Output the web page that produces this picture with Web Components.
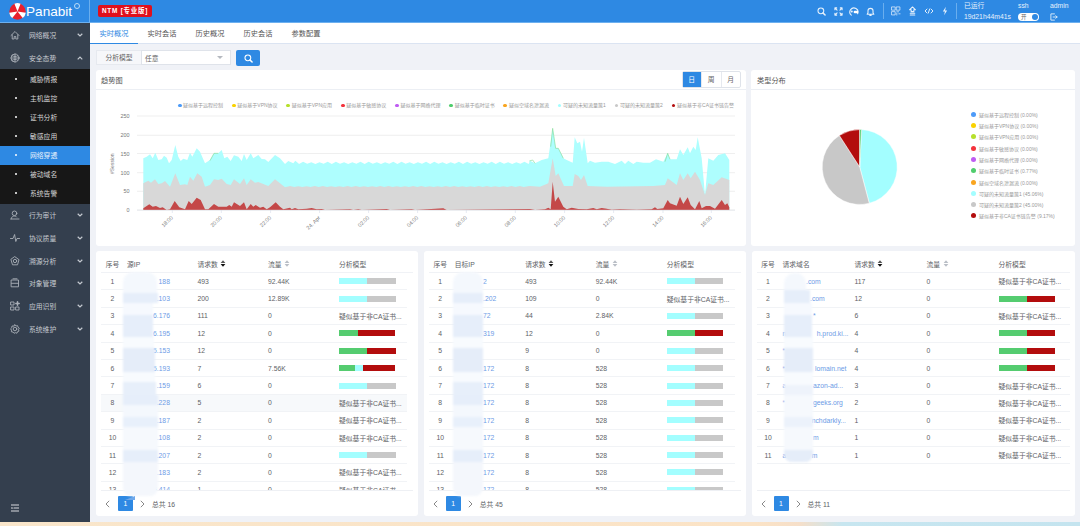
<!DOCTYPE html>
<html lang="zh"><head><meta charset="utf-8"><title>Panabit</title>
<style>
html,body{margin:0;padding:0;height:526px;overflow:hidden;background:#f0f2f7;font-family:"Liberation Sans","Noto Sans CJK SC",sans-serif;font-size:7px;color:#606266}
</style></head><body>
<app-shell></app-shell>
<script>
const FONT='"Liberation Sans","Noto Sans CJK SC",sans-serif';
function def(name,render){customElements.define(name,class extends HTMLElement{connectedCallback(){if(this.shadowRoot)return;const s=this.attachShadow({mode:'open'});s.innerHTML=render(this)}})}
const ic=(w,h,vb,body,extra='')=>`<svg width="${w}" height="${h}" viewBox="${vb}" fill="none" stroke="currentColor" stroke-width="1.2" stroke-linecap="round" stroke-linejoin="round" ${extra}>${body}</svg>`;

def('app-shell',()=>`<style>
:host{display:flex;flex-direction:column;height:526px;width:1080px;overflow:hidden}
.mid{flex:1;display:flex;min-height:0}
.strip{height:4px;background:linear-gradient(90deg,#f9e6cb 0,#fbe3c6 70%,#f6dfc9 74%,#c7e6f0 78%,#c4e4ef 100%)}
.main{flex:1;display:flex;flex-direction:column;min-width:0;padding-bottom:6px}
.content{flex:1;display:flex;flex-direction:column;gap:5px;padding:6px 5.5px 0 6px;min-height:0}
.r1{display:flex;gap:5px;height:176px}
.r2{display:flex;gap:5.5px;height:265px}
</style>
<app-header></app-header>
<div class="mid"><side-nav></side-nav>
<div class="main"><tab-bar></tab-bar>
<div class="content"><filter-bar></filter-bar>
<div class="r1"><trend-card></trend-card><pie-card></pie-card></div>
<div class="r2"><data-table kind="src"></data-table><data-table kind="dst"></data-table><data-table kind="dom"></data-table></div>
</div></div></div><div class="strip"></div>`);

def('app-header',()=>`<style>
:host{display:flex;align-items:center;height:23px;background:#2e89e3;border-bottom:1px solid #6db0ef;box-sizing:border-box;color:#e6f1fc;font-family:${FONT}}
.logo{width:90px;height:22px;display:flex;align-items:center;padding-left:9px;box-sizing:border-box;position:relative;border-right:1px solid #6aaeee}
.logo b{font:400 13.6px "Liberation Sans",sans-serif;color:#fff}
.logo i{position:absolute;left:73.5px;top:3px;width:4px;height:4px;border:.7px solid #bcdcf8;border-radius:50%}
.badge{margin-left:8px;background:#e0101c;color:#fff;border-radius:2px;font:700 6.4px ${FONT};letter-spacing:.8px;width:54px;height:12px;line-height:12px;text-align:center;white-space:nowrap}
.sp{flex:1}
.ico{display:flex;align-items:center;justify-content:center;width:16.3px;height:12px}
.sep{width:1px;height:16px;background:#6aaeee;margin:0 4px}
.grp{display:flex;align-items:center}
.stat{display:flex;flex-direction:column;gap:3px;font-size:6.8px;line-height:8px;white-space:nowrap}
.tg{width:21px;height:8px;border-radius:4px;background:#fff;color:#666;font-size:5.5px;line-height:8px;padding-left:3px;box-sizing:border-box;position:relative;display:block}
.tg::after{content:"";position:absolute;right:1px;top:1px;width:6px;height:6px;border-radius:50%;background:#2e89e3}
</style>
<div class="logo">
<svg width="17" height="17" viewBox="-10 -10 20 20"><circle r="9.6" fill="#e8202c"/><g fill="#fff"><path d="M0 0L-3.6-9.2A10 10 0 0 1 3.6-9.2Z"/><path d="M0 0L-3.6-9.2A10 10 0 0 1 3.6-9.2Z" transform="rotate(120)"/><path d="M0 0L-3.6-9.2A10 10 0 0 1 3.6-9.2Z" transform="rotate(240)"/></g></svg>
<b>Panabit</b><i></i></div>
<div class="badge">NTM [专业版]</div><div class="sp"></div>
<div class="grp">
<span class="ico">${ic(9,9,'0 0 10 10','<circle cx="4.3" cy="4.3" r="3.2"/><path d="M6.8 6.8L9 9" stroke-width="1.6"/>')}</span>
<span class="ico">${ic(9,9,'0 0 10 10','<path d="M1 1L3.4 3.4M9 1L6.6 3.4M1 9L3.4 6.6M9 9L6.6 6.6M1 3V1H3M7 1H9V3M1 7V9H3M9 7V9H7"/>')}</span>
<span class="ico">${ic(10,9,'0 0 11 10','<path d="M2.5 9A4.5 4.5 0 1 1 9.5 7.5"/><path d="M10 4.2H6.5A1.4 1.4 0 0 0 6.5 7H10Z" fill="#fff" stroke="none"/><circle cx="3" cy="5" r=".6"/>')}</span>
<span class="ico">${ic(9,9,'0 0 10 10','<path d="M1.3 8H8.7L7.8 6.5V4.3A2.8 2.8 0 0 0 2.2 4.3V6.5ZM4.2 9.3H5.8"/>')}</span>
<span class="sep"></span>
<span class="ico">${ic(10,10,'0 0 11 11','<rect x="1" y="1" width="3.6" height="3.6" stroke-width=".8"/><rect x="6.2" y="1" width="3.6" height="3.6" stroke-width=".8"/><rect x="1" y="6.2" width="3.6" height="3.6" stroke-width=".8"/><path d="M6.4 6.4H8.4M6.4 8V10M8.6 8.6H10" stroke-width=".8"/>')}</span>
<span class="ico">${ic(9,10,'0 0 10 11','<path d="M5 1L8.3 4.2H6.5V6.2H3.5V4.2H1.7ZM2.5 8H7.5M2.5 10H7.5"/>')}</span>
<span class="ico">${ic(10,8,'0 0 12 10','<path d="M3.5 2.5L1 5L3.5 7.5M8.5 2.5L11 5L8.5 7.5M6.8 2.5L5.2 7.5"/>')}</span>
<span class="ico">${ic(6,10,'0 0 7 11','<path d="M4.5 .5L1 6H3.4L2.5 10.5L6 4.8H3.6Z" fill="currentColor" stroke="none"/>')}</span>
<span class="sep" style="margin:0 7px 0 3px"></span>
<div class="stat" style="width:54px"><span>已运行</span><span>19d21h44m41s</span></div>
<div class="stat" style="width:32px"><span>ssh</span><span class="tg">开</span></div>
<div class="stat" style="width:30px"><span>admin</span>${ic(8,8,'0 0 9 9','<path d="M5 1H1V8H5M3.5 4.5H8M6.5 3L8 4.5L6.5 6" stroke-width="1"/>')}</div>
</div>`);

const navIcons={
home:'<path d="M1 5.5L5 1.5L9 5.5M2.2 4.8V9H4.2V6.5H5.8V9H7.8V4.8"/>',
globe:'<circle cx="5" cy="5" r="4"/><path d="M1 5H9M5 1V9M2.2 2.8C4 3.8 6 3.8 7.8 2.8M2.2 7.2C4 6.2 6 6.2 7.8 7.2"/>',
user:'<circle cx="4.5" cy="3.3" r="2.3"/><path d="M1 9C1.5 6.8 3 6 4.5 6S6 6.5 6.5 7M1 9H9"/>',
pulse:'<path d="M.5 5.5H3L4.6 1.5L5.8 8.5L7 5.5H9.5"/>',
hex:'<path d="M5 .8L9 3.7L7.5 8.8H2.5L1 3.7Z"/><circle cx="5" cy="5" r="1.7"/>',
box:'<rect x="1.5" y="2" width="7" height="6.8"/><path d="M1.5 5.3H8.5M3 .8H7"/>',
apps:'<rect x="1" y="1" width="3" height="3"/><rect x="1" y="6" width="3" height="3"/><rect x="6" y="6" width="3" height="3"/><path d="M7.5 .8V4.2M5.8 2.5H9.2" stroke-width="1.5"/>',
gear:'<circle cx="5" cy="5" r="1.8"/><path d="M5 .8L6 2L7.6 1.7L8 3.3L9.3 4.2L8.5 5.6L9 7.1L7.5 7.7L7 9.2L5.4 8.7L4 9.3L3 8L1.4 7.8L1.5 6.1L.6 4.8L1.8 3.7L2 2L3.7 2.1Z" stroke-width=".9"/>'};
const chev=(up)=>`<svg width="6" height="4" viewBox="0 0 6 4" fill="none" stroke="#c4c9d0" stroke-width="1.2"><path d="${up?'M.7 3.3L3 1L5.3 3.3':'M.7 .8L3 3L5.3 .8'}"/></svg>`;
def('side-nav',()=>{
const item=(ic_,t,up)=>`<div class="it"><span class="i">${ic(10,10,'0 0 10 10',navIcons[ic_])}</span><span class="t">${t}</span>${chev(up)}</div>`;
const sub=(t,a)=>`<div class="sb${a?' on':''}"><em></em><span>${t}</span></div>`;
return `<style>
:host{display:flex;flex-direction:column;width:90px;flex:none;background:#343f4e;color:#c6cad0;font:6.8px ${FONT}}
.it{height:22.7px;display:flex;align-items:center;padding:0 7.5px 0 10px;box-sizing:border-box}
.i{width:10px;height:10px;display:block;color:#aab0b8;margin-right:9px}.i svg{display:block}
.i svg{stroke-width:.9}
.t{flex:1;white-space:nowrap}
.top{background:#36414f;padding-top:1px}
.subs{background:#171717;padding:.5px 0 1px}
.sb{height:19px;display:flex;align-items:center;padding-left:14.5px;color:#d5d5d5;white-space:nowrap}
.sb em{width:2px;height:2px;border-radius:50%;background:#fff;margin-right:13.5px}
.sb.on{background:#2e89e3;color:#e8f2fc}
.g{flex:1}.foot{height:18px;display:flex;padding:0 0 0 11px;color:#d8dadd}
</style><div class="top">${item('home','网络概况')}${item('globe','安全态势',1)}</div>
<div class="subs">${sub('威胁情报')}${sub('主机监控')}${sub('证书分析')}${sub('敏感应用')}${sub('网络穿透',1)}${sub('被动域名')}${sub('系统告警')}</div>
${item('user','行为审计')}${item('pulse','协议质量')}${item('hex','溯源分析')}${item('box','对象管理')}${item('apps','应用识别')}${item('gear','系统维护')}
<div class="g"></div><div class="foot">${ic(8,8,'0 0 8 8','<path d="M0 1H8M3 4H8M0 7H8M0 4H1.5"/>')}</div>`});

def('tab-bar',()=>`<style>
:host{display:flex;height:21px;background:#fff;border-bottom:1px solid #dbe4f2;box-sizing:border-box;font:7.2px ${FONT};color:#555}
span{width:48px;text-align:center;line-height:21px;white-space:nowrap;box-sizing:border-box;height:21px}
.on{color:#2e89e3;border-bottom:1px solid #2e89e3}
</style><span class="on">实时概况</span><span>实时会话</span><span>历史概况</span><span>历史会话</span><span>参数配置</span>`);

def('filter-bar',()=>`<style>
:host{display:flex;height:15px;font:6.8px ${FONT};color:#666;align-items:stretch}
.l{width:45px;background:#f6f7fa;border:1px solid #e6e9ef;border-right:0;box-sizing:border-box;text-align:center;line-height:14px}
.s{width:90px;background:#fff;border:1px solid #dfe3ea;box-sizing:border-box;display:flex;align-items:center;justify-content:space-between;padding:0 7px 0 3px}
.s i{width:0;height:0;border:3px solid transparent;border-top:3.4px solid #b5b9c0;margin-top:3px}
.b{width:24px;margin-left:5px;background:#2e89e3;border-radius:2px;color:#fff;display:flex;align-items:center;justify-content:center;height:16px}
</style><span class="l">分析模型</span><span class="s">任意<i></i></span><span class="b">${ic(9,9,'0 0 10 10','<circle cx="4.3" cy="4.3" r="3.2"/><path d="M6.8 6.8L9 9" stroke-width="1.6"/>')}</span>`);

const LEG=[['疑似基于远程控制','#4d9bf8'],['疑似基于VPN协议','#fad200'],['疑似基于VPN应用','#b6e02c'],['疑似基于敏感协议','#f4333c'],['疑似基于网络代理','#bf5cf2'],['疑似基于临时证书','#50cd6d'],['疑似空域名泄漏流','#f9a51f'],['可疑的未知流量簇1','#a3feff'],['可疑的未知流量簇2','#c8c8c8'],['疑似基于非CA证书链告警','#b30d0d']];

function areaPaths(){
 const a=(z,ox)=>z.map(p=>[ox+p[0]/3,90+p[1]/3]);
 const c1=[[160,205],[170,200],[180,193],[188,205],[196,188],[205,210],[215,208],[222,197],[230,203],[237,220],[245,210],[256,165],[265,200],[272,213],[280,206],[292,210],[300,188],[307,200],[320,175],[330,185],[345,220],[360,210],[372,190],[385,190],[395,180],[403,205],[412,200],[422,213],[432,196],[445,200],[455,213],[462,192],[470,210],[482,190],[490,205],[505,195],[515,207],[525,208],[535,216],[555,195],[570,205],[585,222],[595,213],[610,220],[616,212],[625,220]];
 const c2=[[330,212],[345,220],[365,210],[385,205],[398,115],[407,175],[415,175],[430,205],[440,210],[458,218],[464,142],[472,160],[480,155],[486,185],[492,143],[503,220],[510,212],[525,218],[545,215],[565,215],[585,222],[605,212],[615,222],[625,212],[640,222],[650,215],[670,218],[690,218],[708,208],[730,215],[743,190],[750,208],[770,208],[780,178],[790,195],[803,172],[810,190],[820,170],[827,180],[833,142],[845,205],[855,315],[865,205],[880,212],[895,195],[915,190],[928,210]];
 const g1=[[160,280],[175,272],[183,278],[195,268],[205,282],[215,280],[225,273],[240,290],[256,250],[270,285],[285,283],[292,285],[300,260],[310,272],[322,250],[335,260],[345,290],[360,285],[372,268],[385,270],[395,266],[410,282],[422,285],[432,268],[450,282],[462,265],[470,285],[482,268],[495,278],[505,276],[520,282],[535,288],[555,268],[570,280],[585,292]];
 const g2=[[330,288],[360,290],[385,280],[398,205],[407,258],[415,250],[432,288],[458,288],[464,252],[475,258],[483,270],[492,255],[503,288],[560,290],[700,288],[735,285],[743,265],[770,285],[780,250],[790,270],[803,250],[812,265],[825,245],[840,270],[855,315],[865,280],[880,285],[905,262],[928,270]];
 const r1=[[160,355],[178,343],[188,350],[198,348],[210,354],[218,352],[230,360],[240,358],[254,333],[268,352],[285,358],[296,333],[305,342],[320,323],[332,330],[345,358],[355,358],[372,342],[385,350],[410,350],[418,345],[425,350],[432,337],[450,348],[462,337],[470,358],[482,342],[490,350],[497,345],[510,353],[520,350],[530,358],[540,352],[557,337],[570,350],[580,358],[600,353],[605,358],[615,354],[625,358],[650,356],[665,354],[680,358],[695,357],[705,360],[780,358],[790,360],[805,358],[815,360],[890,357],[900,360],[965,358],[975,360]];
 const r2=[[70,355],[80,360],[330,357],[345,360],[375,358],[385,353],[392,358],[398,275],[405,335],[415,320],[430,350],[440,358],[455,353],[475,357],[500,358],[520,354],[530,358],[545,354],[560,356],[575,359],[600,358],[650,359],[695,358],[705,352],[712,357],[730,355],[743,330],[750,340],[770,347],[780,320],[790,342],[803,322],[812,345],[825,358],[838,333],[845,355],[858,348],[870,348],[885,356],[905,330],[915,345],[922,340],[928,352]];
 const mid=(x0,x1,base,amp)=>{const o=[];let i=0;for(let x=x0;x<x1;x+=4.1,i++){const w=[.7,-.9,.5,-.6,.8,-.5,.6,-1][i%8];o.push([x,base+w*amp])}return o};
 const d=(pts)=>{const L=pts[pts.length-1][0],F=pts[0][0];return 'M'+F.toFixed(1)+' 210L'+pts.map(p=>p[0].toFixed(1)+' '+p[1].toFixed(1)).join('L')+'L'+L.toFixed(1)+' 210Z'};
 const C=[...a(c1,90),...mid(299,529,163,1.3),...a(c2,420)];
 const G=[...a(g1,90),...mid(286,529,186.6,.6),...a(g2,420)];
 const R=[...a(r1,90),...a(r2,420)];
 return {c:d(C),g:d(G),r:d(R),
  gl:[a([[360,212],[372,190],[385,190]],90),a([[392,170],[398,115],[407,175],[415,175],[430,205]],420),a([[735,215],[743,190],[750,208]],420),a([[328,213],[338,210],[345,220]],420)].map(s=>'M'+s.map(p=>p.join(' ')).join('L')).join('')};
}
def('trend-card',()=>{
 const P=areaPaths();
 const grid=[116,135.3,153.5,172.7,191.3,210].map(y=>`<path d="M137 ${y}H735" stroke="#e8e8e8" stroke-width=".7"/>`).join('');
 const yl=[[116,'250'],[135.3,'200'],[153.5,'150'],[172.7,'100'],[191.3,'50'],[210,'0']].map(([y,t])=>`<text x="129.5" y="${y+2}" text-anchor="end">${t}</text>`).join('');
 const xs=[[172.3,'18:00'],[221.3,'20:00'],[270.6,'22:00'],[319.6,'24. Apr'],[368.6,'02:00'],[417.6,'04:00'],[466.3,'06:00'],[515.3,'08:00'],[564.6,'10:00'],[613.6,'12:00'],[663,'14:00'],[711.3,'16:00']];
 const xl=xs.map(([x,t])=>`<path d="M${x} 210V213" stroke="#d5dbe8" stroke-width=".6"/><text x="${x+1}" y="218" text-anchor="end" transform="rotate(-45 ${x+1} 218)">${t}</text>`).join('');
 return `<style>
:host{display:flex;flex-direction:column;width:650px;background:#fff;border-radius:3px;font:6.8px ${FONT};overflow:hidden;color:#555}
.h{height:20px;box-sizing:border-box;flex:none;border-bottom:1px solid #eceff4;display:flex;align-items:center;justify-content:space-between;padding:0 5px;font-size:7.2px}
.sw{display:flex;border:1px solid #dfe3ea;border-radius:2px;height:15px;font-size:6.8px}
.sw span{width:18.5px;text-align:center;line-height:15px;color:#666;border-left:1px solid #e6e9ef}
.sw span:first-child{background:#2e89e3;color:#fff;border:0}
.lg{display:flex;justify-content:flex-end;gap:8.8px;padding:12px 12px 0 0;height:7px;line-height:7px;flex:none;font-size:5px;color:#999;white-space:nowrap}
.lg span{display:flex;align-items:center;gap:1.6px}
.lg i{width:3.8px;height:3.8px;border-radius:50%}
svg{display:block;font:5.4px ${FONT};flex:none}
svg text{fill:#777}
</style><div class="h"><span>趋势图</span><div class="sw"><span>日</span><span>周</span><span>月</span></div></div>
<div class="lg">${LEG.map(l=>`<span><i style="background:${l[1]}"></i>${l[0]}</span>`).join('')}</div>
<svg width="650" height="137" viewBox="96 109 650 137">${grid}${yl}
<text x="0" y="0" transform="translate(113.5 174) rotate(-90)" style="font-size:5px">#Session</text>
<path d="${P.c}" fill="#aefefe"/><path d="${P.gl}" fill="none" stroke="#7fd98f" stroke-width=".6"/><path d="${P.g}" fill="#d8d8d8"/><path d="${P.r}" fill="#c44848"/>
<path d="M137 210.2H735" stroke="#dfe3ea" stroke-width=".6"/>${xl}</svg>`});

def('pie-card',()=>{
 const vals=['0.00','0.00','0.00','0.00','0.00','0.77','0.00','45.06','45.00','9.17'];
 const cx=108.7,cy=77,r=37.5;
 const pt=a=>{const t=a*Math.PI/180;return (cx+r*Math.sin(t)).toFixed(2)+' '+(cy-r*Math.cos(t)).toFixed(2)};
 const sl=(a,b,c)=>`<path d="M${cx} ${cy}L${pt(a)}A${r} ${r} 0 ${b-a>180?1:0} 1 ${pt(b)}Z" fill="${c}" stroke="#fff" stroke-width=".5"/>`;
 return `<style>
:host{display:flex;flex-direction:column;flex:1;background:#fff;border-radius:3px;font:6.8px ${FONT};color:#555;overflow:hidden}
.h{height:20px;box-sizing:border-box;flex:none;border-bottom:1px solid #eceff4;display:flex;align-items:center;padding:0 6px;font-size:7.2px}
.b{display:flex;flex:1}
svg{display:block;flex:none}
.lg{margin-left:5.5px;padding-top:18.6px;font-size:5px;color:#999;white-space:nowrap}
.lg div{height:11.3px;display:flex;align-items:center;gap:3.4px}
.lg i{width:5px;height:5px;border-radius:50%}
</style><div class="h">类型分布</div><div class="b">
<svg width="214" height="155" viewBox="0 0 214 155">${sl(2.77,165.2,'#a3feff')}${sl(165.2,327.2,'#c8c8c8')}${sl(327.2,360,'#b30d0d')}${sl(0,2.77,'#50cd6d')}</svg>
<div class="lg">${LEG.map((l,i)=>`<div><i style="background:${l[1]}"></i>${l[0]} (${vals[i]}%)</div>`).join('')}</div></div>`});

const CG='cg',GR='gr',TX='tx';
const band=['#f4f8fd','#e6eefa','#f6f9fe','#e6eefa','#f8fbfe','#e5edf9','#f8fbfe','#e7effa','#e6eefa','#f4f8fd','#e8f0fb','#f6f9fd','#e6eefa','#f4f7fc'];
const bandH=[21,10,12,22,11,24,10,13,10,12,10,23,12,34];
const TABLES={
src:{head:'源IP',total:16,cols:'26px 70.5px 70.5px 71px 1fr',right:11,left:127,rows:[
 [[158.6,'188'],'493','92.44K',CG],[[156.7,'.103'],'200','12.89K',CG],[[153,'6.176'],'111','0',TX],[[153,'6.195'],'12','0',[33,67]],[[153,'5.153'],'12','0',GR],[[153,'5.193'],'7','7.56K','gcr'],[[156.7,'.159'],'6','0',CG],[[156.7,'.228'],'5','0',TX],[[156.7,'.187'],'2','0',TX],[[156.7,'.108'],'2','0',TX],[[156.7,'.207'],'2','0',CG],[[156.7,'.183'],'2','0',TX],[[153,'6.414'],'1','0',TX]],
 mask:{x:27,y:21,cap:1,w:[34,35,30,30,31,32,32,33,35,35,35,35,35,35],c:band,h:bandH}},
dst:{head:'目标IP',total:45,cols:'26px 70.5px 70.5px 71px 1fr',right:11,left:454.75,rows:[
 [[483,'2'],'493','92.44K',CG],[[483,'.202'],'109','0',TX],[[483,'72'],'44','2.84K',CG],[[483,'319'],'12','0',GR],[[483,''],'9','0',CG],[[483,'172'],'8','528',CG],[[483,'172'],'8','528',CG],[[483,'172'],'8','528',CG],[[483,'172'],'8','528',CG],[[483,'172'],'8','528',CG],[[483,'172'],'8','528',CG],[[483,'172'],'8','528',CG],[[483,'172'],'8','528',CG]],
 mask:{x:29,y:21,w:new Array(14).fill(30),c:band,h:bandH}},
dom:{head:'请求域名',total:11,cols:'26px 72px 72px 72px 1fr',right:5,left:782.5,rows:[
 [[806,'.com'],'117','0',TX],[[810,'.com'],'12','0',GR],[[813,'*'],'6','0',TX],[[816.7,'h.prod.ki...','n'],'4','0',GR],[[782.5,'*'],'4','0',GR],[[815,'lomain.net','*'],'4','0',GR],[[813,'azon-ad...','a'],'3','0',TX],[[813,'geeks.org','*'],'2','0',TX],[[811.7,'nchdarkly...'],'1','0',TX],[[813,'m'],'1','0',TX],[[811.7,'m','a'],'1','0',TX]],
 mask:{x:32.5,y:22,w:[22,26,28,28,29,29,29,29,29,29,29,29],c:['#f4f8fd','#e6eefa','#f6f9fe','#e6eefa','#f8fbfe','#e5edf9','#f8fbfe','#eef3fb','#f6f9fd','#ecf2fb','#f6f9fd','#e5edf9'],h:[17,13,12,22,11,24,13,10,22,10,23,12]}}
};
const bar=m=>{
 const seg=(w,c)=>`<i style="width:${w}%;background:${c}"></i>`;
 if(m===TX)return `<span class="mt">疑似基于非CA证书...</span>`;
 let s='';
 if(m===CG)s=seg(50,'#a3feff')+seg(50,'#c8c8c8');
 else if(m===GR)s=seg(50,'#55cc70')+seg(50,'#b30d0d');
 else if(m==='gcr')s=seg(28.5,'#55cc70')+seg(14,'#a3feff')+seg(57.5,'#b30d0d');
 else s=seg(m[0],'#55cc70')+seg(m[1],'#b30d0d');
 return `<span class="bar">${s}</span>`};
const sortI=(on)=>`<svg width="6" height="7" viewBox="0 0 6 7" style="margin-left:2.5px"><path d="M3 .3L5.4 3H.6Z" fill="${on?'#555':'#b9bec6'}"/><path d="M3 6.7L5.4 4H.6Z" fill="${on?'#111':'#b9bec6'}"/></svg>`;
def('data-table',(el)=>{
 const k=el.getAttribute('kind'),T=TABLES[k],M=T.mask,left=T.left;
 const ipCell=c=>{
  if(c[2])return `<span class="ip"><span>${c[2]}</span><span style="position:absolute;left:${c[0]-left}px">${c[1]}</span></span>`;
  return `<span class="ip" style="padding-left:${c[0]-left}px">${c[1]}</span>`};
 const rows=T.rows.map((r,i)=>`<div class="row${k==='src'&&i===7?' hv':''}"><span class="n">${i+1}</span>${ipCell(r[0])}<span>${r[1]}</span><span>${r[2]}</span><span class="m">${bar(r[3])}</span></div>`).join('');
 return `<style>
:host{display:flex;flex-direction:column;flex:${k==='dom'?'0 0 323px':'0 0 322.25px'};min-width:0;background:#fff;border-radius:3px;font:6.8px ${FONT};color:#606266;position:relative;overflow:hidden}
.hd,.row{display:grid;grid-template-columns:${T.cols};align-items:center;white-space:nowrap}
.hd{height:18px;box-sizing:border-box;margin:4px 5px 0;border-bottom:1px solid #f0f2f6}
.hd span{display:flex;align-items:center}.n{justify-content:center;text-align:center;padding-right:3px}
.bd{flex:1;overflow:hidden;padding:0 ${T.right}px 0 5px;min-height:0}
.row{height:17.4px;box-sizing:border-box;border-bottom:1px solid #f1f3f6}
.row.hv{background:#f7f9fb}
.ip{color:#6d9be6;position:relative;display:block}
.m{min-width:0;display:block}
.mt{display:block}
.bar{display:flex;width:56.5px;height:6px}.bar i{display:block;height:6px}
.ft{height:26px;flex:none;border-top:1px solid #eef0f4;margin:0 5px;display:flex;align-items:center;padding-left:4px;box-sizing:border-box}
.pg{width:15px;height:15px;background:#2e89e3;color:#fff;border-radius:1px;text-align:center;line-height:15px;margin:0 7px 0 8px}
.tot{margin-left:7px;white-space:nowrap}
.arr{color:#888;display:block}
.mask{position:absolute;left:${M.x}px;top:${M.y}px;display:flex;flex-direction:column;align-items:flex-start;filter:blur(.8px);pointer-events:none}
.mask i{display:block}
.mask i:first-child{border-radius:10px 10px 0 0}
.mask i:last-child{border-radius:0 0 8px 8px}
.cap{position:absolute;left:29px;top:245px;width:10px;height:4px;background:#6fa8ea;clip-path:polygon(0 100%,100% 0,100% 100%)}
</style>
<div class="hd"><span class="n">序号</span><span>${T.head}</span><span>请求数${sortI(1)}</span><span>流量${sortI(0)}</span><span>分析模型</span></div>
<div class="bd">${rows}</div>
<div class="ft"><svg class="arr" width="5" height="8" viewBox="0 0 5 8" fill="none" stroke="currentColor" stroke-width="1"><path d="M4.2 .8L1 4L4.2 7.2"/></svg><span class="pg">1</span><svg class="arr" width="5" height="8" viewBox="0 0 5 8" fill="none" stroke="currentColor" stroke-width="1"><path d="M.8 .8L4 4L.8 7.2"/></svg><span class="tot">总共 ${T.total}</span></div>
<div class="mask">${M.h.map((h,i)=>`<i style="height:${h}px;width:${M.w[i]}px;background:${M.c[i]}"></i>`).join('')}</div>${M.cap?'<div class="cap"></div>':''}`});
</script></body></html>
